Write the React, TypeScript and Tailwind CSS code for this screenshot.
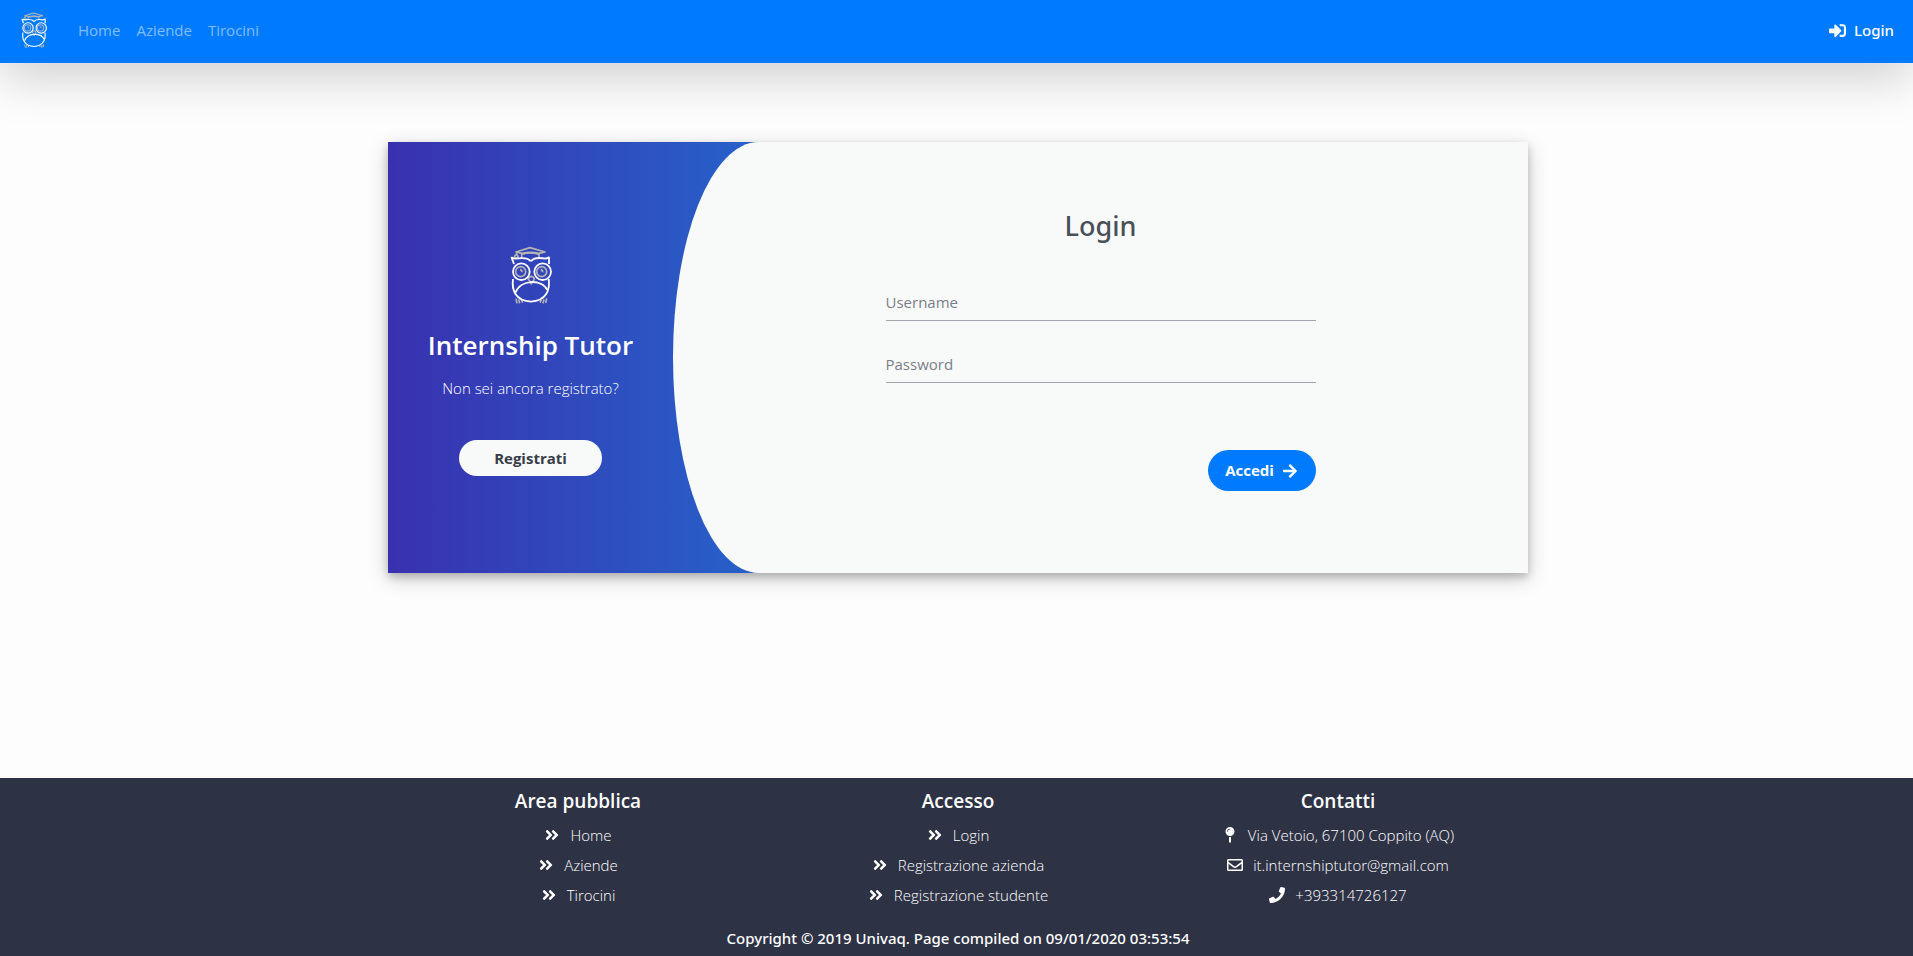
import type { ReactNode } from "react";
import type { IconType } from "react-icons";
import {
  FaAngleDoubleRight,
  FaArrowRight,
  FaMapPin,
  FaPhone,
  FaRegEnvelope,
  FaSignInAlt,
} from "react-icons/fa";

function Owl({ className }: { className: string }) {
  return (
    <svg viewBox="0 0 126 174" fill="none" className={className} aria-hidden="true">
      <g stroke="#b5b5b5" strokeWidth="5" strokeLinejoin="round">
        <path d="M18 18 60 5l45 13-18 4q-27-6-51 0z" />
        <path d="M35 22v14M87 22v14M35 25q26-8 52 0" />
        <path d="M20 18v8M20 26q-8 2-6 10h10q1-8-4-10z" />
        <circle cx="32" cy="77" r="15" />
        <circle cx="95" cy="77" r="15" />
        <path d="M30 71q6 0 6 8M92 71q6 0 6 8" />
        <path d="M64 91q-9 2-9 9 5 4 9 14 5-10 9-14 0-7-9-9z" />
        <path d="M18 158l3 14M26 160l3 12M34 161l4 9M94 161l-4 9M102 160l-3 12M110 157l-3 14" />
      </g>
      <g stroke="#fff" strokeWidth="5.5" strokeLinejoin="round">
        <path d="M12 54Q9 46 5 35l10 3q38-5 45 6h5q9-12 42-6l10-4v20" />
        <circle cx="34" cy="77" r="25" />
        <circle cx="98" cy="77" r="25" />
        <path d="M9 99c-4 32 6 66 54 68 46-2 58-36 53-68" />
        <path d="M17 139c14-38 78-42 96-6" />
      </g>
    </svg>
  );
}

function FooterColumn({ title, children }: { title: string; children: ReactNode }) {
  return (
    <section className="flex flex-col items-center">
      <h2 className="text-[19px] leading-6 font-semibold">{title}</h2>
      <ul className="mt-[7px] flex flex-col items-center">{children}</ul>
    </section>
  );
}

function FooterItem({ icon: Icon, href, children }: { icon: IconType; href: string; children: ReactNode }) {
  return (
    <li>
      <a href={href} className="flex h-[30px] items-center gap-2.5 text-[15px] font-light">
        <Icon className="h-4 w-auto" />
        {children}
      </a>
    </li>
  );
}

function Field({ id, label, type }: { id: string; label: string; type: string }) {
  return (
    <input
      id={id}
      type={type}
      aria-label={label}
      placeholder={label}
      className="h-[38px] w-full border-b border-[#a2a5ae] bg-transparent text-[15px] text-[#495057] outline-none placeholder:text-[#7b7e89]"
    />
  );
}

export default function App() {
  return (
    <div className="flex min-h-screen flex-col bg-[#fdfdfd] font-['Open_Sans','Noto_Sans',sans-serif]">
      <nav className="flex h-[63px] items-center bg-[#007bff] pr-[19px] pb-[3px] pl-[21px] text-[15px] shadow-[0_16px_48px_rgba(0,0,0,0.175)]">
        <a href="#home" aria-label="Internship Tutor">
          <Owl className="h-9 w-[26px]" />
        </a>
        <div className="ml-[31px] flex gap-4 text-white/50">
          <a href="#home">Home</a>
          <a href="#aziende">Aziende</a>
          <a href="#tirocini">Tirocini</a>
        </div>
        <a href="#login" className="ml-auto flex items-center gap-2 font-['Noto_Sans','Open_Sans',sans-serif] font-medium text-white">
          <FaSignInAlt className="size-[17px]" />
          Login
        </a>
      </nav>

      <main className="flex-1 pt-[79px] pb-10 pl-[3px]">
        <div className="mx-auto grid max-w-[1140px] grid-cols-[1fr_3fr] bg-linear-to-r/srgb from-[#3931af] to-[#00c6ff] shadow-[0_4px_8px_rgba(0,0,0,0.2),0_6px_20px_rgba(0,0,0,0.19)]">
          <div className="flex flex-col items-center pt-[104px] text-white">
            <Owl className="h-[58px] w-[42px]" />
            <h1 className="mt-[23px] text-[26px] leading-9 font-semibold">Internship Tutor</h1>
            <p className="mt-[13px] text-[15px] leading-6 font-light">Non sei ancora registrato?</p>
            <button
              type="button"
              className="mt-10 h-9 w-[143px] rounded-full bg-[#f8faf9] text-[15px] font-bold text-[#383d49]"
            >
              Registrati
            </button>
          </div>
          <form
            className="rounded-l-[10%_50%] bg-[#f8faf9] pt-[66px] pb-[82px]"
            onSubmit={(event) => event.preventDefault()}
          >
            <div className="mx-auto flex max-w-[430px] flex-col">
              <h2 className="text-center font-['Noto_Sans','Open_Sans',sans-serif] text-[27px] leading-9 font-medium text-[#495057]">
                Login
              </h2>
              <div className="mt-[39px] flex flex-col gap-6">
                <Field id="username" label="Username" type="text" />
                <Field id="password" label="Password" type="password" />
              </div>
              <button
                type="submit"
                className="mt-[67px] flex h-[41px] w-[108px] items-center justify-center gap-2 self-end rounded-full bg-[#007bff] text-[15px] font-bold text-white"
              >
                Accedi
                <FaArrowRight className="size-4" />
              </button>
            </div>
          </form>
        </div>
      </main>

      <footer className="bg-[#2e3245] pt-[11px] pb-[6px] pl-[3px] text-white">
        <div className="mx-auto grid max-w-[1140px] grid-cols-3">
          <FooterColumn title="Area pubblica">
            <FooterItem icon={FaAngleDoubleRight} href="#home">Home</FooterItem>
            <FooterItem icon={FaAngleDoubleRight} href="#aziende">Aziende</FooterItem>
            <FooterItem icon={FaAngleDoubleRight} href="#tirocini">Tirocini</FooterItem>
          </FooterColumn>
          <FooterColumn title="Accesso">
            <FooterItem icon={FaAngleDoubleRight} href="#login">Login</FooterItem>
            <FooterItem icon={FaAngleDoubleRight} href="#registrazione-azienda">Registrazione azienda</FooterItem>
            <FooterItem icon={FaAngleDoubleRight} href="#registrazione-studente">Registrazione studente</FooterItem>
          </FooterColumn>
          <FooterColumn title="Contatti">
            <FooterItem icon={FaMapPin} href="#mappa">Via Vetoio, 67100 Coppito (AQ)</FooterItem>
            <FooterItem icon={FaRegEnvelope} href="mailto:it.internshiptutor@gmail.com">it.internshiptutor@gmail.com</FooterItem>
            <FooterItem icon={FaPhone} href="tel:+393314726127">+393314726127</FooterItem>
          </FooterColumn>
        </div>
        <p className="mt-4 text-center font-['Noto_Sans','Open_Sans',sans-serif] text-[15px] leading-6 font-medium">
          Copyright © 2019 Univaq. Page compiled on 09/01/2020 03:53:54
        </p>
      </footer>
    </div>
  );
}
